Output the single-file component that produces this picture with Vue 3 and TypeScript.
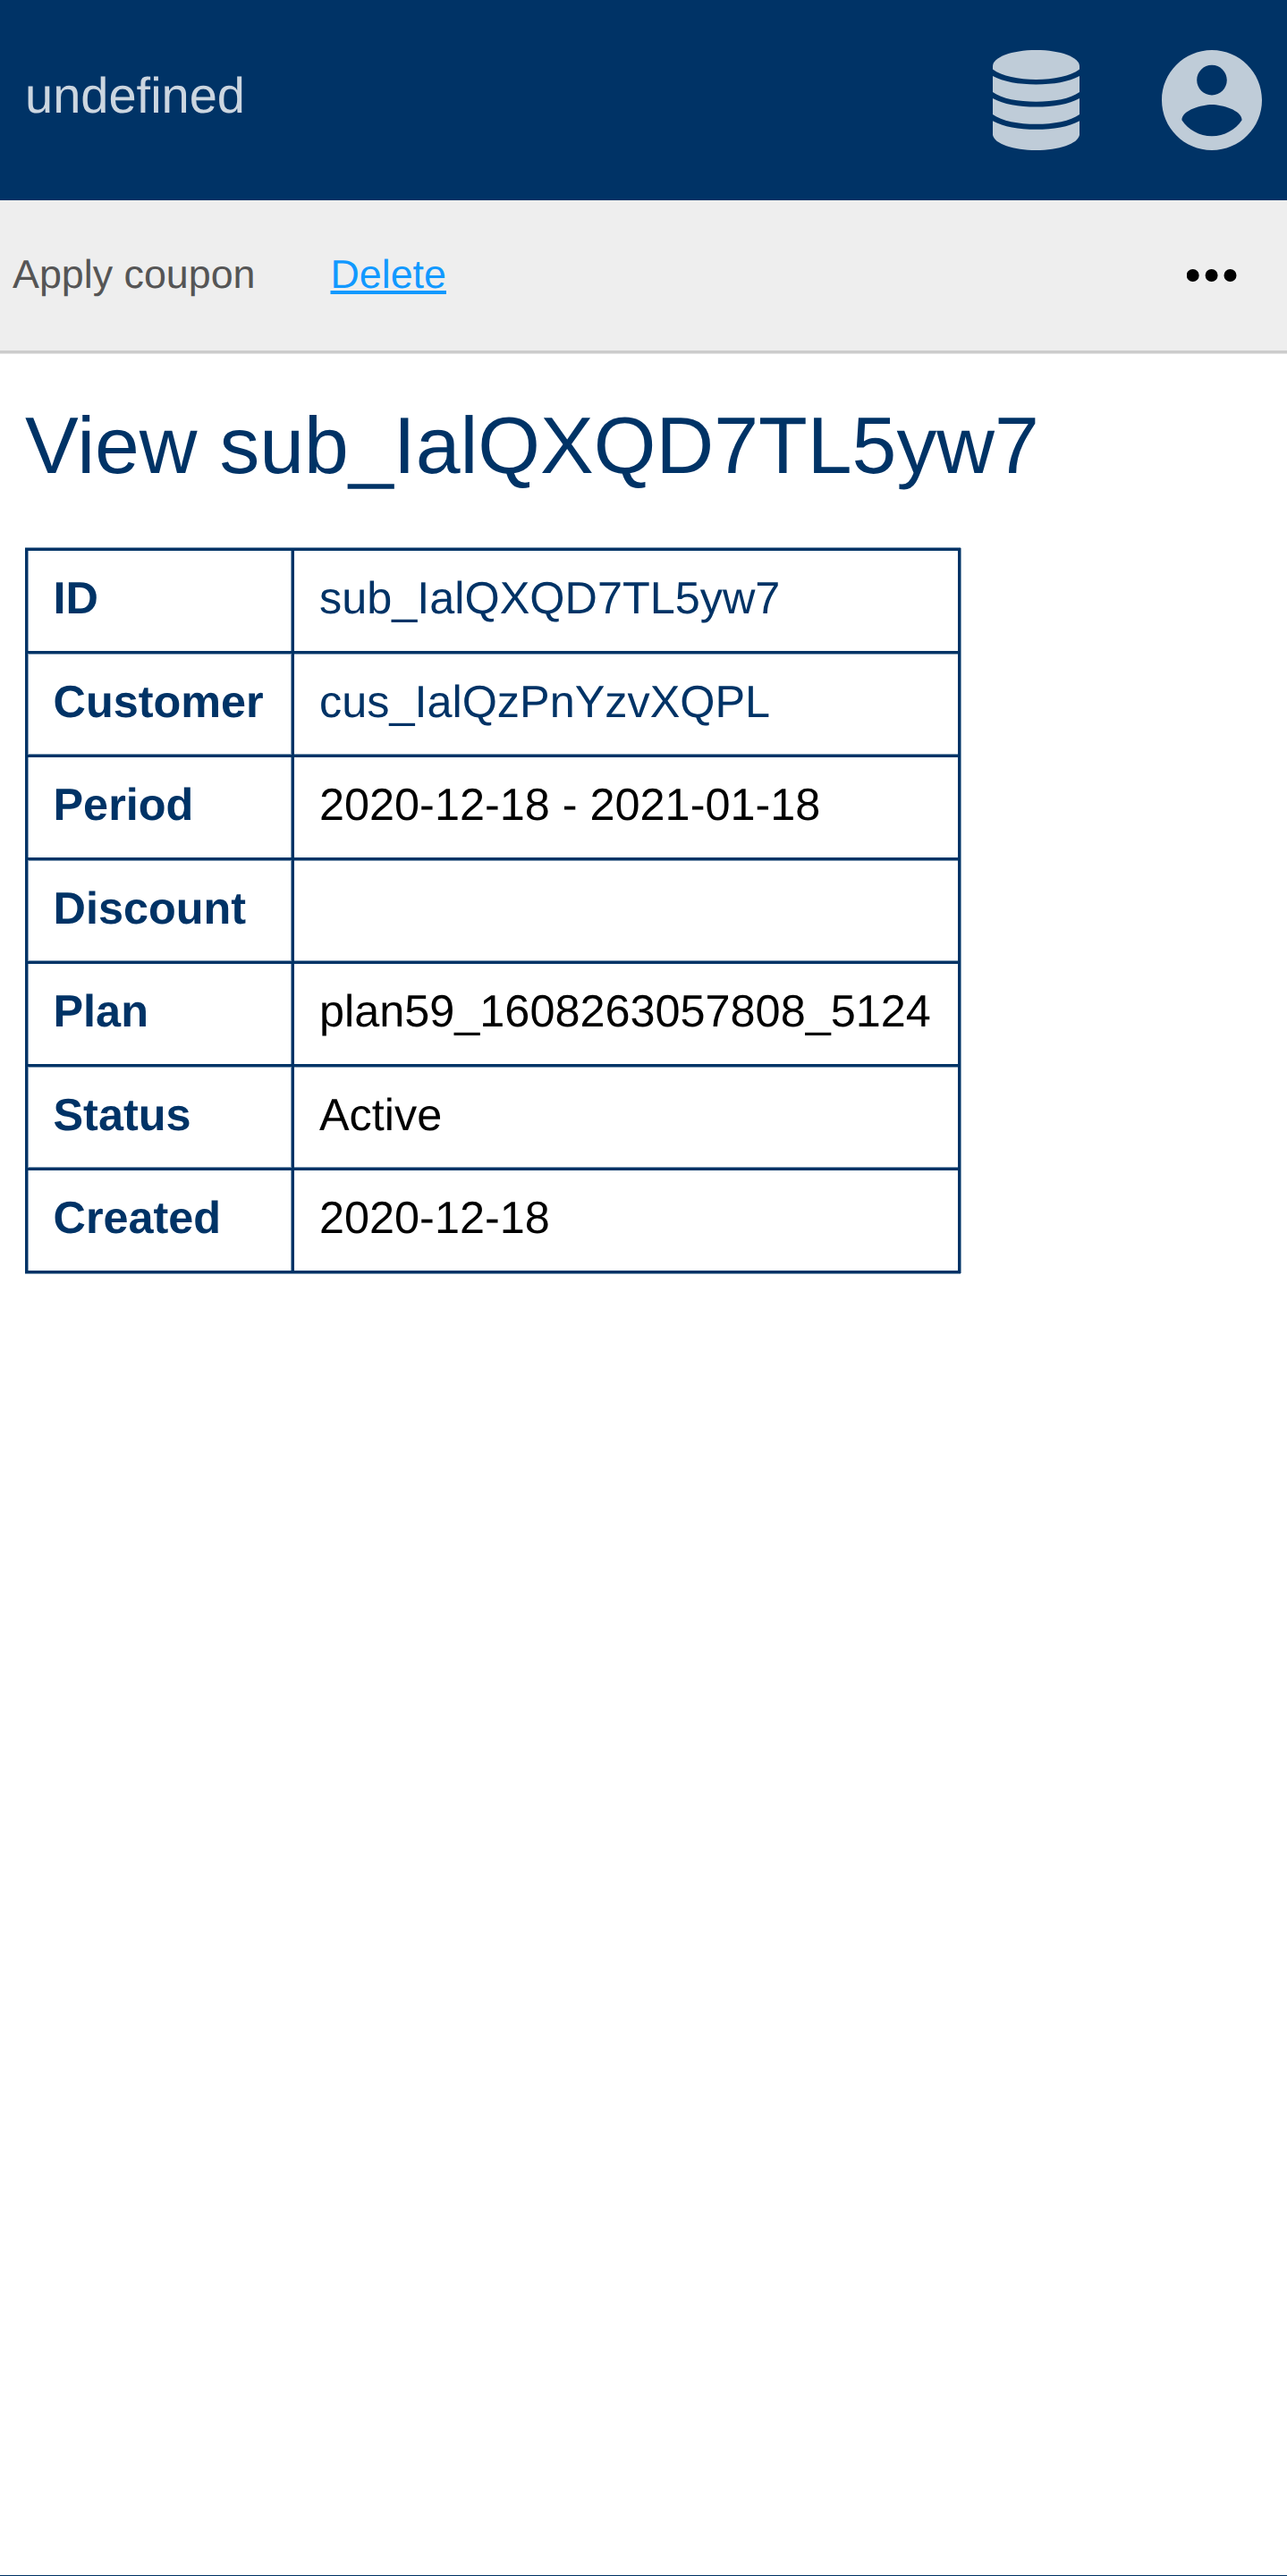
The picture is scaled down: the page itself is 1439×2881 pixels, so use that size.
<script setup lang="ts">
interface Row {
  label: string
  value: string
  link?: boolean
}

const subscription = 'sub_IalQXQD7TL5yw7'

const rows: Row[] = [
  { label: 'ID', value: subscription, link: true },
  { label: 'Customer', value: 'cus_IalQzPnYzvXQPL', link: true },
  { label: 'Period', value: '2020-12-18 - 2021-01-18' },
  { label: 'Discount', value: '' },
  { label: 'Plan', value: 'plan59_1608263057808_5124' },
  { label: 'Status', value: 'Active' },
  { label: 'Created', value: '2020-12-18' },
]
</script>

<template>
  <div class="page">
    <header class="header">
      <a class="brand">undefined</a>
      <div class="menus">
        <svg class="database" viewBox="0 0 97 112">
          <path d="M0 18C0 8 21 0 48.5 0S97 8 97 18V21.5C87 29 68 33 48.5 33S10 29 0 21.5Z" />
          <path d="M0 29C12 35.500 29 38.400 48.500 38.400S85 35.500 97 29V47C87 54.500 68 57.700 48.500 57.700S10 54.500 0 47Z" />
          <path d="M0 54C12 60.500 29 63.600 48.500 63.600S85 60.500 97 54V72C87 79.500 68 82.800 48.500 82.800S10 79.500 0 72Z" />
          <path d="M0 79.200C12 85.700 29 88.800 48.500 88.800S85 85.700 97 79.200V95C95 105 74 112 48.500 112S2 105 0 95Z" />
        </svg>
        <svg class="account" viewBox="2 2 20 20">
          <path d="M12 2C6.480 2 2 6.480 2 12s4.480 10 10 10 10-4.480 10-10S17.520 2 12 2zm0 3c1.660 0 3 1.340 3 3s-1.340 3-3 3-3-1.340-3-3 1.340-3 3-3zm0 14.200c-2.500 0-4.710-1.280-6-3.220.030-1.990 4-3.080 6-3.080 1.990 0 5.970 1.090 6 3.080-1.290 1.940-3.500 3.220-6 3.220z" />
        </svg>
      </div>
    </header>

    <nav class="actions">
      <a class="action">Apply coupon</a>
      <a class="action active">Delete</a>
      <svg class="more" viewBox="0 0 56 14">
        <circle cx="6.700" cy="7" r="7" />
        <circle cx="27.600" cy="7" r="7" />
        <circle cx="48.500" cy="7" r="7" />
      </svg>
    </nav>

    <main class="content">
      <h1>View {{ subscription }}</h1>
      <table>
        <tbody>
          <tr v-for="row in rows" :key="row.label">
            <th>{{ row.label }}</th>
            <td><a v-if="row.link">{{ row.value }}</a><template v-else>{{ row.value }}</template></td>
          </tr>
        </tbody>
      </table>
    </main>
  </div>
</template>

<style>
body {
  margin: 0;
  background: #fff;
}
</style>

<style scoped>
.page {
  --navy: #003366;
  --edge: #8099b3;
  box-sizing: border-box;
  height: 2881px;
  overflow: hidden;
  border-bottom: 1px solid var(--navy);
  background: #fff;
  color: #000;
  font-family: "Liberation Sans", Arial, sans-serif;
  text-rendering: geometricPrecision;
}

.header {
  box-sizing: border-box;
  display: flex;
  align-items: center;
  justify-content: space-between;
  height: 224px;
  padding: 0 28px;
  background: var(--navy);
}

.brand {
  margin-top: -10px;
  color: #ccd6e0;
  font-size: 56px;
  line-height: 64px;
}

.menus {
  display: flex;
  gap: 92px;
}

.menus svg {
  display: block;
  height: 112px;
  fill: #bfccd8;
}

.database {
  width: 97px;
}

.account {
  width: 112px;
}

.actions {
  box-sizing: border-box;
  display: flex;
  gap: 84px;
  height: 172px;
  padding: 57px 56px 0 14px;
  background: #eee;
  box-shadow: inset 0 -1px 0 #e5e5e5, inset 0 -4px 0 #ccc;
}

.action {
  color: #555;
  font-size: 44.8px;
  line-height: 52px;
}

.active {
  color: #1199ff;
  text-decoration: underline;
}

.more {
  width: 56px;
  height: 14px;
  margin-top: 20px;
  margin-left: auto;
}

.content {
  padding: 50px 28px 0;
}

h1 {
  margin: 0 0 63px;
  color: var(--navy);
  font-size: 89.6px;
  font-weight: 400;
  line-height: 104px;
  white-space: nowrap;
}

table {
  table-layout: fixed;
  width: 1046px;
  border-collapse: separate;
  border-spacing: 0;
  box-shadow: 1px 0 0 var(--edge), 0 -1px 0 var(--edge), 0 1px 0 var(--edge);
  font-size: 50.4px;
  line-height: 57px;
}

/* Rules are 3px solid with a 1px softened edge on one side. */
th,
td {
  box-sizing: border-box;
  height: 115px;
  padding: 27px 0 0 31px;
  text-align: left;
  vertical-align: top;
  white-space: nowrap;
}

th {
  width: 298px;
  padding-left: 31.5px;
  color: var(--navy);
  font-weight: 700;
  box-shadow: inset 3px 0 0 var(--navy), inset 0 3px 0 var(--navy),
    inset 4px 0 0 var(--edge), inset -1px 0 0 var(--edge);
}

td {
  box-shadow: inset 3px 0 0 var(--navy), inset 0 3px 0 var(--navy),
    inset -3px 0 0 var(--navy);
}

tr:nth-child(even) th,
tr:nth-child(even) td {
  height: 116px;
  padding-top: 28px;
}

tr:nth-child(even) th {
  box-shadow: inset 3px 0 0 var(--navy), inset 0 3px 0 var(--navy),
    inset 4px 0 0 var(--edge), inset -1px 0 0 var(--edge),
    inset 0 4px 0 var(--edge), inset 0 -1px 0 var(--edge);
}

tr:nth-child(even) td {
  box-shadow: inset 3px 0 0 var(--navy), inset 0 3px 0 var(--navy),
    inset -3px 0 0 var(--navy), inset 0 4px 0 var(--edge),
    inset 0 -1px 0 var(--edge);
}

tr:last-child th,
tr:last-child td {
  height: 118px;
}

tr:last-child th {
  box-shadow: inset 3px 0 0 var(--navy), inset 0 3px 0 var(--navy),
    inset 0 -3px 0 var(--navy), inset 4px 0 0 var(--edge),
    inset -1px 0 0 var(--edge);
}

tr:last-child td {
  box-shadow: inset 3px 0 0 var(--navy), inset 0 3px 0 var(--navy),
    inset -3px 0 0 var(--navy), inset 0 -3px 0 var(--navy);
}

td a {
  color: var(--navy);
}
</style>
